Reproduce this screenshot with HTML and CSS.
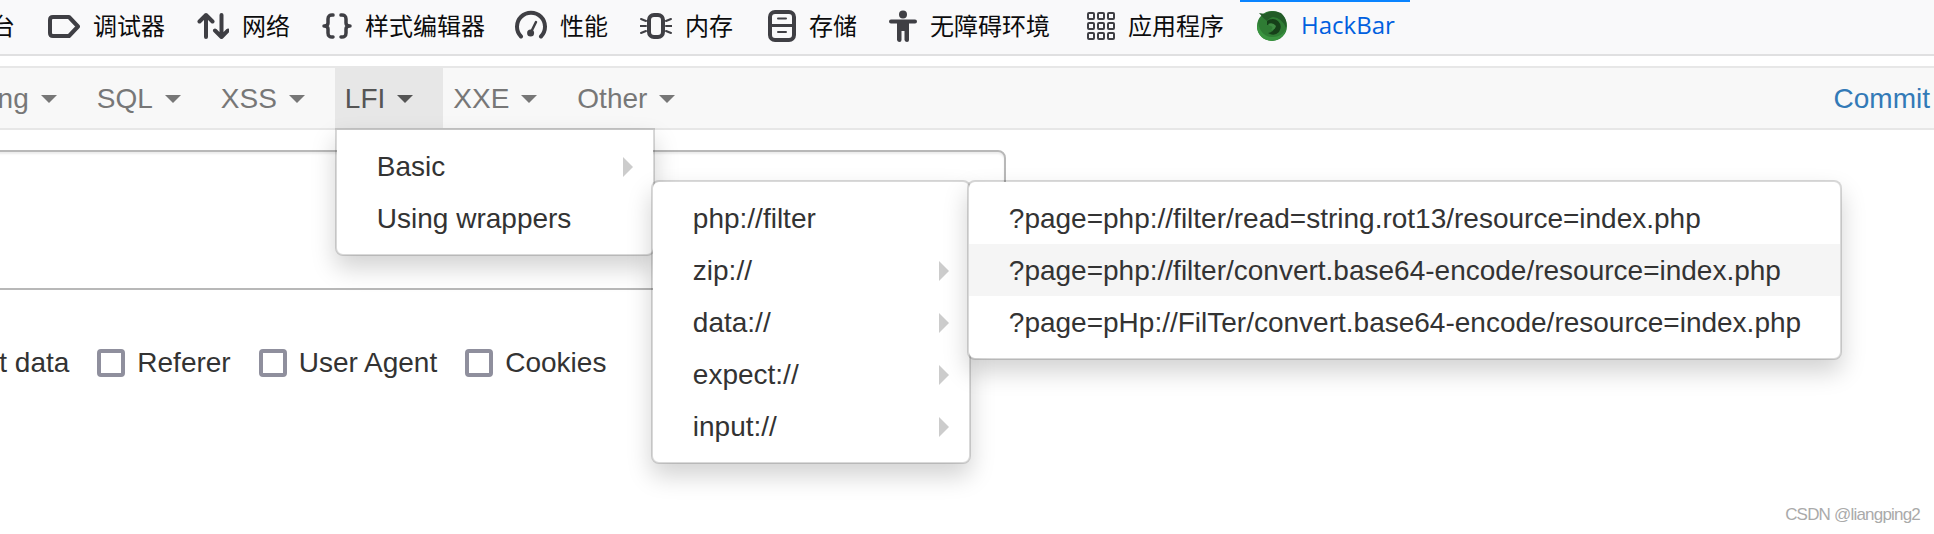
FILE: index.html
```html
<!DOCTYPE html>
<html lang="zh-CN">
<head>
<meta charset="utf-8">
<title>HackBar</title>
<link rel="stylesheet" href="styles.css">
</head>
<body>
<header class="toolbar">
  <div class="tab tab-first"><span>控制台</span></div>
  <div class="tab">
    <svg class="icon" width="32" height="34" viewBox="0 0 32 34"><path class="st" stroke-width="4" d="M5 7H21L30 16.500L21 26H5Q2 26 2 23V10Q2 7 5 7Z"/></svg>
    <span>调试器</span>
  </div>
  <div class="tab">
    <svg class="icon" width="32" height="34" viewBox="0 0 32 34"><path class="st" stroke-width="4" d="M9 27V5M2.500 11.500L9 5L15.500 11.500M24.500 5V27M18 20.500L24.500 27L31 20.500"/></svg>
    <span>网络</span>
  </div>
  <div class="tab tab-style">
    <svg class="icon" width="30" height="34" viewBox="0 0 30 34"><path class="st" stroke-width="3.500" d="M11 5Q6 4.500 6 9V13Q6 16 2 16Q6 16 6 19V23Q6 27.500 11 27M19 5Q24 4.500 24 9V13Q24 16 28 16Q24 16 24 19V23Q24 27.500 19 27"/></svg>
    <span>样式编辑器</span>
  </div>
  <div class="tab">
    <svg class="icon" width="32" height="34" viewBox="0 0 32 34"><path class="st" stroke-width="4" d="M6 26.500A14 14 0 1 1 26 26.500"/><path class="st" stroke-width="2.500" d="M15.600 23L21 12"/><circle class="fl" cx="15.600" cy="23" r="3.500"/></svg>
    <span>性能</span>
  </div>
  <div class="tab tab-memory">
    <svg class="icon" width="32" height="34" viewBox="0 0 32 34"><rect class="st" stroke-width="4" x="9" y="5" width="14" height="22" rx="5"/><path class="st" stroke-width="2" d="M1 9L6 11M0 16H6M1 23L6 21M26 11L31 9M26 16H32M26 21L31 23"/></svg>
    <span>内存</span>
  </div>
  <div class="tab">
    <svg class="icon" width="28" height="34" viewBox="0 0 28 34"><rect class="st" stroke-width="4" x="2" y="2" width="24" height="28" rx="5"/><path class="st" stroke-width="3" d="M3 15.500H25"/><path class="st" stroke-width="2" d="M10 8.500H18M10 22H18"/></svg>
    <span>存储</span>
  </div>
  <div class="tab tab-access">
    <svg class="icon" width="28" height="34" viewBox="0 0 28 34"><circle class="fl" cx="14" cy="4.500" r="4"/><path class="fl" d="M2 9.500H26Q28 9.500 28 11.500T26 13.500H20V30Q20 32 18 32T15.500 30V21H12.500V30Q12.500 32 10.500 32T8 30V13.500H2Q0 13.500 0 11.500T2 9.500Z"/></svg>
    <span>无障碍环境</span>
  </div>
  <div class="tab">
    <svg class="icon" width="28" height="34" viewBox="0 0 28 34"><g class="st" stroke-width="2"><rect x="1" y="3" width="6" height="6" rx="1"/><rect x="11" y="3" width="6" height="6" rx="1"/><rect x="21" y="3" width="6" height="6" rx="1"/><rect x="1" y="13" width="6" height="6" rx="1"/><rect x="11" y="13" width="6" height="6" rx="1"/><rect x="21" y="13" width="6" height="6" rx="1"/><rect x="1" y="23" width="6" height="6" rx="1"/><rect x="11" y="23" width="6" height="6" rx="1"/><rect x="21" y="23" width="6" height="6" rx="1"/></g></svg>
    <span>应用程序</span>
  </div>
  <div class="tab tab-active">
    <svg class="icon" width="32" height="34" viewBox="0 0 32 34"><circle cx="16" cy="16" r="15" fill="#2f7c34"/><path d="M3 3L9 4Q16 -1 25 3Q32 9 30 18Q26 8 17 7Q13 8 11 11Q7 8 3 3Z" fill="#235c28"/><path d="M11 11Q17 7 22 11Q27 16 23 22Q18 27 12 23Q17 22 19 18Q17 14 11 15Z" fill="#164019"/><path d="M12 14Q17 12 20 16Q19 20 15 20Q18 17 15 16Q13 16 12 14Z" fill="#3f8a43"/><path d="M2 13Q5 27 17 27Q26 27 30 19Q28 29 16 31Q3 30 1 18Z" fill="#3a9440"/></svg>
    <span class="hackbar">HackBar</span>
  </div>
</header>

<nav class="nav">
  <div class="nav-item">Encoding<i class="caret"></i></div>
  <div class="nav-item">SQL<i class="caret"></i></div>
  <div class="nav-item">XSS<i class="caret"></i></div>
  <div class="nav-item nav-active">LFI<i class="caret"></i>
    <div class="menu menu-one">
      <div class="row">Basic<i class="arrow"></i></div>
      <div class="row">Using wrappers
        <div class="menu menu-two">
          <div class="row">php://filter
            <div class="menu menu-three">
              <div class="row">?page=php://filter/read=string.rot13/resource=index.php</div>
              <div class="row row-hover">?page=php://filter/convert.base64-encode/resource=index.php</div>
              <div class="row">?page=pHp://FilTer/convert.base64-encode/resource=index.php</div>
            </div>
          </div>
          <div class="row">zip://<i class="arrow"></i></div>
          <div class="row">data://<i class="arrow"></i></div>
          <div class="row">expect://<i class="arrow"></i></div>
          <div class="row">input://<i class="arrow"></i></div>
        </div>
      </div>
    </div>
  </div>
  <div class="nav-item">XXE<i class="caret"></i></div>
  <div class="nav-item">Other<i class="caret"></i></div>
  <div class="nav-commit">Commit</div>
</nav>

<main class="main">
  <div class="url-box"></div>
  <div class="options">
    <label class="option"><input type="checkbox" class="check">Post data</label>
    <label class="option"><input type="checkbox" class="check">Referer</label>
    <label class="option"><input type="checkbox" class="check">User Agent</label>
    <label class="option"><input type="checkbox" class="check">Cookies</label>
  </div>
</main>
<div class="watermark">CSDN @liangping2</div>
</body>
</html>
```
FILE: styles.css
```css
* { box-sizing: border-box; }
html, body { margin: 0; height: 100%; overflow: hidden; background: #fff; }
body { font-family: "Liberation Sans", Arial, sans-serif; font-size: 28px; color: #333; position: relative; }

.toolbar {
  display: flex;
  height: 56px;
  margin-left: -57px;
  background: #f9f9fa;
  border-bottom: 2px solid #e0e0e1;
  font-family: "Noto Sans CJK SC", "Noto Sans", sans-serif;
  font-size: 24px;
  color: #0c0c0d;
  width: calc(100% + 57px);
}
.tab { display: flex; align-items: center; gap: 13px; padding: 0 16px; height: 54px; white-space: nowrap; }
.tab span { padding-bottom: 6px; }
.tab-first { padding-left: 0; padding-right: 17px; }
.tab-style { padding-right: 14px; }
.tab-memory { padding-right: 19px; }
.tab-access { padding-right: 21px; }
.tab-active { border-top: 2px solid #0a84ff; padding-bottom: 2px; padding-right: 15px; }
.hackbar { font-family: "Open Sans", "Noto Sans", sans-serif; color: #0060df; }
.icon { flex: none; display: block; }
.st { fill: none; stroke: #3f3f44; stroke-linecap: round; stroke-linejoin: round; }
.fl { fill: #3f3f44; }

.nav {
  display: flex;
  height: 64px;
  margin-top: 10px;
  margin-left: -98px;
  background: #f8f8f8;
  border-top: 2px solid #e7e7e7;
  border-bottom: 2px solid #e7e7e7;
  color: #777;
}
.nav-item { position: relative; display: flex; align-items: center; padding: 1px 30px 0 10px; height: 60px; white-space: nowrap; }
.nav-active { background: #e7e7e7; color: #555; }
.caret { width: 0; height: 0; margin-left: 12px; border-top: 8px solid currentColor; border-left: 8px solid transparent; border-right: 8px solid transparent; }
.nav-commit { margin-left: auto; display: flex; align-items: center; height: 60px; padding: 1px 4px 0 0; color: #337ab7; }

.menu {
  position: absolute;
  background: #fff;
  border: 2px solid rgba(0, 0, 0, .15);
  background-clip: padding-box;
  border-radius: 8px;
  padding: 10px 0;
  box-shadow: 0 12px 24px rgba(0, 0, 0, .175);
  color: #333;
}
.menu-one { left: 0; top: 60px; width: 320px; border-radius: 0 0 8px 8px; z-index: 1; }
.menu-two { left: 314px; top: -12px; width: 320px; z-index: 2; }
.menu-three { left: 314px; top: -12px; width: 875px; z-index: 3; }
.row { position: relative; display: flex; align-items: center; justify-content: space-between; height: 52px; padding: 1px 20px 0 40px; white-space: nowrap; }
.row-hover { background: #f5f5f5; }
.arrow { width: 0; height: 0; border-left: 10px solid #ccc; border-top: 10px solid transparent; border-bottom: 10px solid transparent; }

.main { padding-top: 20px; }
.url-box {
  width: 1106px;
  height: 140px;
  margin-left: -100px;
  border: 2px solid #b8b8b8;
  border-radius: 8px;
  box-shadow: inset 0 2px 2px rgba(0, 0, 0, .075);
}
.options { display: flex; align-items: center; gap: 28px; margin-top: 53px; margin-left: -89px; }
.option { display: flex; align-items: center; gap: 12px; height: 40px; white-space: nowrap; }
.check { appearance: none; margin: 0; width: 28px; height: 28px; flex: none; border: 4px solid #8f8f9d; border-radius: 4px; background: #fff; }

.watermark { position: absolute; right: 14px; bottom: 9px; font-size: 17px; letter-spacing: -.8px; color: #aaa; }
```
